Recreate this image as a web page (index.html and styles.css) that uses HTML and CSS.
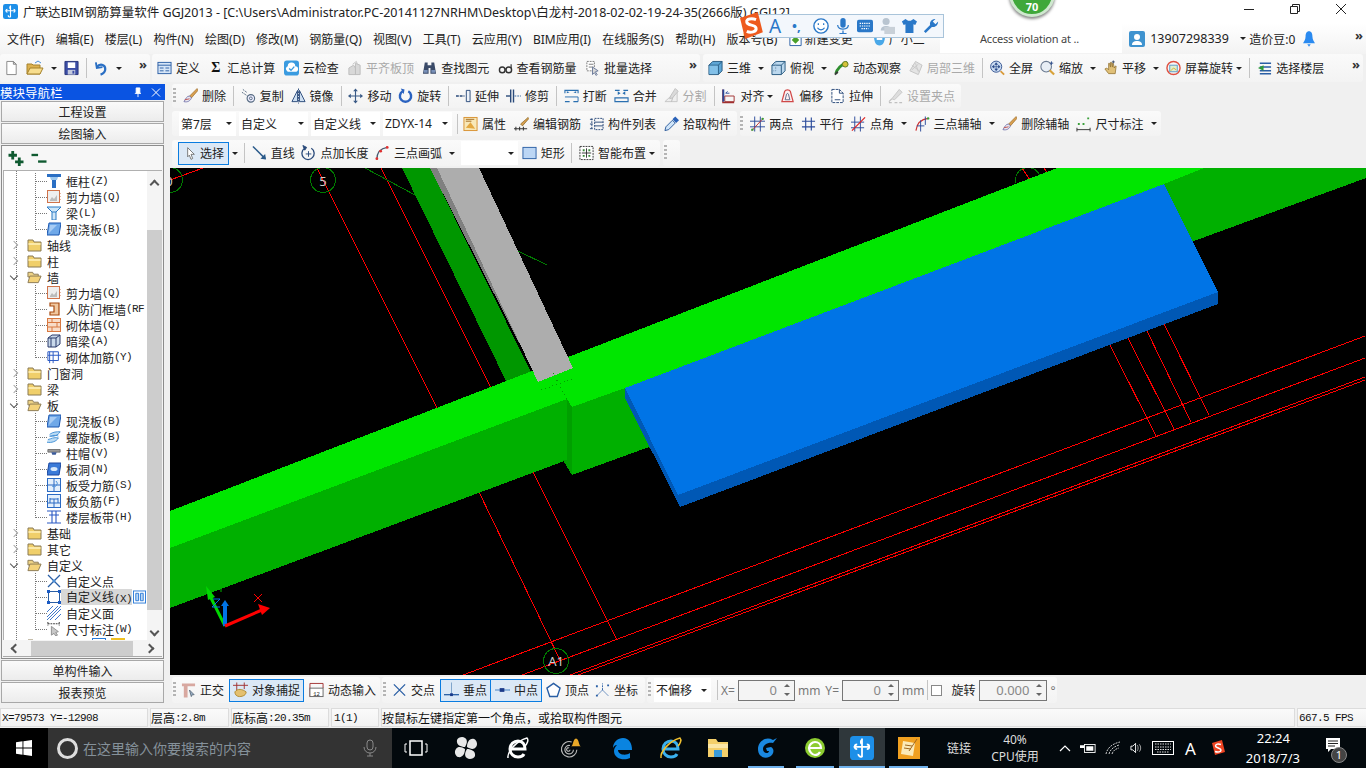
FILE: index.html
```html
<!DOCTYPE html>
<html lang="zh-CN">
<head>
<meta charset="utf-8">
<title>广联达BIM钢筋算量软件 GGJ2013</title>
<link rel="stylesheet" href="styles.css">
</head>
<body>
<svg class="sprite" aria-hidden="true">
<defs>
<symbol id="new" viewBox="0 0 16 16"><path d="M3 1h7l3 3v11H3z" fill="#fff" stroke="#858585"/><path d="M10 1v3h3z" fill="#ddd" stroke="#858585"/></symbol>
<symbol id="open" viewBox="0 0 18 16"><path d="M1 4h5l1 1h7v9H1z" fill="#dcb14f" stroke="#a5822c"/><path d="M4 8h13l-3 6H1z" fill="#f7dd8e" stroke="#a5822c"/><path d="M9 3l3-2 3 2" stroke="#4a8fd8" fill="none"/></symbol>
<symbol id="save" viewBox="0 0 16 16"><path d="M1 1h14v14H1z" fill="#3b4da6" stroke="#27337a"/><path d="M4 2h8v6H4z" fill="#fff"/><path d="M4 10h8v5H4z" fill="#c4cade"/><path d="M9 11h2v3H9z" fill="#3b4da6"/></symbol>
<symbol id="undo" viewBox="0 0 16 16"><path d="M2 2l1 6 6-1" fill="none" stroke="#2a6fc4" stroke-width="2"/><path d="M3 7c3-4 9-3 9 2 0 3-2 5-5 6" fill="none" stroke="#2a6fc4" stroke-width="2.4"/></symbol>
<symbol id="def" viewBox="0 0 16 16"><rect x="1" y="2" width="14" height="12" fill="#d7e6f7" stroke="#2b5fa5"/><path d="M1 5h14M3 8h4M3 11h4M9 8h4M9 11h4" stroke="#2b5fa5"/></symbol>
<symbol id="cloud" viewBox="0 0 16 16"><rect x="0" y="0" width="16" height="16" rx="3" fill="#3a9be0"/><path d="M3 11a3 3 0 0 1 1-5 4 4 0 0 1 8 0 3 3 0 0 1 0 6H4z" fill="#fff"/><path d="M5.500 8.500l2 2 3.500-4" fill="none" stroke="#3a9be0" stroke-width="1.500"/></symbol>
<symbol id="flat" viewBox="0 0 16 16"><path d="M2 15V8l5-3 2 3v7zM9 15V3l5 2v10z" fill="#d8d8d8" stroke="#bcbcbc"/><path d="M6 4l4-3 1 3" stroke="#c4c4c4" fill="none"/></symbol>
<symbol id="binoc" viewBox="0 0 16 16"><path d="M3 2h3v3h4V2h3l2 12H9V8H7v6H1z" fill="#3a4a68"/><path d="M2 10h4v3H2zM10 10h4v3h-4z" fill="#7890b8"/></symbol>
<symbol id="glass" viewBox="0 0 16 16"><circle cx="4.500" cy="10" r="3" fill="none" stroke="#333" stroke-width="1.500"/><circle cx="11.500" cy="10" r="3" fill="none" stroke="#333" stroke-width="1.500"/><path d="M7 9h2M14 8V4" stroke="#333" stroke-width="1.200"/></symbol>
<symbol id="batch" viewBox="0 0 16 16"><path d="M2 1h8v10H2z" fill="#fff" stroke="#7a7a7a" stroke-dasharray="2 1"/><path d="M4 4h5M4 7h5" stroke="#7a7a7a"/><path d="M8 7l6 4-3 1 2 3-1 1-2-3-2 2z" fill="#d8d8d8" stroke="#6a7a9a"/></symbol>
<symbol id="cube" viewBox="0 0 16 16"><path d="M1 5l4-4h10v10l-4 4H1z" fill="#5ea6d6" stroke="#25577e"/><path d="M1 5h10v10M11 5l4-4" fill="none" stroke="#25577e"/><path d="M1.500 5.500h9v9h-9z" fill="#82c0e8"/></symbol>
<symbol id="cubel" viewBox="0 0 16 16"><path d="M1 5l4-4h10v10l-4 4H1z" fill="#bcd8ee" stroke="#25577e"/><path d="M1 5h10v10M11 5l4-4" fill="none" stroke="#25577e"/><path d="M5 1v10H1" fill="none" stroke="#7ea0bc" stroke-dasharray="2 1"/></symbol>
<symbol id="orbit" viewBox="0 0 16 16"><path d="M2 14C3 9 8 4 14 2" fill="none" stroke="#2f8f2f" stroke-width="3"/><circle cx="12" cy="4" r="3" fill="#d6c23a" stroke="#5d7a20"/><path d="M1 15l3-3" stroke="#3a3a3a" stroke-width="2"/></symbol>
<symbol id="local" viewBox="0 0 16 16"><path d="M8 1l7 4-4 10-9-4z" fill="#e4e4e4" stroke="#c2c2c2"/><path d="M4 5l8 6M8 3l3 9M11 4l-7 6" stroke="#c8c8c8"/></symbol>
<symbol id="full" viewBox="0 0 17 17"><circle cx="7" cy="7" r="6.300" fill="#cbdcf2" stroke="#2a4a8a"/><path d="M7 3v8M3 7h8M7 2.500l-1.500 2h3zM7 11.500l-1.500-2h3zM2.500 7l2-1.500v3zM11.500 7l-2-1.500v3z" stroke="#2a4a8a" fill="#2a4a8a" stroke-width=".7"/><path d="M12 12l4 4" stroke="#d89a3a" stroke-width="2"/></symbol>
<symbol id="zoomi" viewBox="0 0 17 17"><circle cx="7" cy="7" r="6" fill="#e8eef5" stroke="#6a7a90" stroke-width="1.200"/><path d="M11 11l5 5" stroke="#d8a23a" stroke-width="2.400"/><path d="M13 1v4M11 3h4" stroke="#2a4a8a"/></symbol>
<symbol id="pan" viewBox="0 0 16 16"><path d="M2 9l2-1 2 2V3l1 0 1 4V2l1 0 1 5V3l1 0 1 5 1-2 1 0-1 8H6z" fill="#e0c078" stroke="#907030" stroke-width=".8"/><path d="M11 0v3M9.500 1.500h3" stroke="#3a4a68"/></symbol>
<symbol id="screen" viewBox="0 0 16 16"><circle cx="8" cy="8" r="7" fill="none" stroke="#e05040" stroke-width="1.500"/><rect x="4" y="5" width="8" height="7" fill="#dff0d0" stroke="#5a9ac8"/><path d="M5 11l3-3 3 2" fill="none" stroke="#d8b030"/></symbol>
<symbol id="floor" viewBox="0 0 16 16"><path d="M3 3h12M3 7h12M3 11h12M3 14h12" stroke="#2a5fa5" stroke-width="1.600"/><path d="M7 5L1 8l6 3z" fill="#2e9a3a"/></symbol>
<symbol id="erase" viewBox="0 0 16 16"><path d="M15 0L7 8l2 2 7-8z" fill="#d8a050" stroke="#906020" stroke-width=".6"/><path d="M7 8c-3 0-4 3-6 6 4 1 7-1 8-4z" fill="#e8e8f0" stroke="#6060a0" stroke-width=".8"/><path d="M2 12l5-1" stroke="#c05050"/></symbol>
<symbol id="copy" viewBox="0 0 16 16"><circle cx="10.500" cy="10.500" r="4" fill="#eef" stroke="#556a80" stroke-width="1.200"/><circle cx="10.500" cy="10.500" r="1.500" fill="none" stroke="#556a80"/><path d="M2 1l4 3M1 4l6 4" stroke="#556a80" stroke-dasharray="2 1"/></symbol>
<symbol id="mirror" viewBox="0 0 16 16"><path d="M7 2v12H1zM9 2v12h6z" fill="#cfe0f2" stroke="#2a4a7a"/><path d="M8 0v16" stroke="#2a4a7a" stroke-dasharray="2 1"/></symbol>
<symbol id="move" viewBox="0 0 16 16"><path d="M8 1v14M1 8h14" stroke="#3a5a86" stroke-width="1.200"/><path d="M8 0L5.500 3h5zM8 16l-2.500-3h5zM0 8l3-2.500v5zM16 8l-3-2.500v5z" fill="#3a5a86"/></symbol>
<symbol id="rot" viewBox="0 0 16 16"><path d="M5 3a6 6 0 1 0 6 0" fill="none" stroke="#2a62c0" stroke-width="2.600"/><path d="M3 0l4 1-1 5z" fill="#2a62c0"/></symbol>
<symbol id="ext" viewBox="0 0 16 16"><path d="M0 8h9" stroke="#2a4a7a" stroke-dasharray="3 1" stroke-width="1.500"/><path d="M11 2h4v12h-4z" fill="#eef3fa" stroke="#2a4a7a"/></symbol>
<symbol id="trim" viewBox="0 0 16 16"><path d="M5 1v14M8 1v14" stroke="#2a4a7a" stroke-width="1.500"/><path d="M0 8h5" stroke="#2a4a7a" stroke-width="1.500"/><path d="M9 8h7" stroke="#7a9ac0" stroke-dasharray="2 1" stroke-width="1.500"/></symbol>
<symbol id="brk" viewBox="0 0 16 16"><path d="M1 5V2h14v3M1 14h5M10 14h5" fill="none" stroke="#2a6fb0" stroke-width="1.200"/><path d="M1 9h14v5" fill="none" stroke="#2a6fb0"/><path d="M6 4L3 3v2zM10 4l3-1v2z" fill="#2a6fb0"/></symbol>
<symbol id="mrg" viewBox="0 0 16 16"><path d="M1 2h5M10 2h5M1 10h14v4H1z" fill="none" stroke="#2a6fb0" stroke-width="1.200"/><path d="M7 5L4 3v4zM9 5l3-2v4z" fill="#2a6fb0"/></symbol>
<symbol id="spl" viewBox="0 0 16 16"><path d="M1 14L14 2v12z" fill="#eee" stroke="#c4c4c4"/><path d="M8 14l2-7" stroke="#bbb"/><path d="M12 0l3 3-6 7-3 1 1-3z" fill="#dadada" stroke="#c0c0c0"/></symbol>
<symbol id="align" viewBox="0 0 16 16"><path d="M2 1v14h12" fill="none" stroke="#a03030" stroke-width="1.400"/><path d="M4 8h10v6H4z" fill="none" stroke="#a03030"/><path d="M2.500 1v13" stroke="#2a4a9a" stroke-width="2"/><path d="M5 5h4M5 5l2-2" stroke="#2a4a9a"/></symbol>
<symbol id="offs" viewBox="0 0 16 16"><path d="M2 14l3-11c1-2 5-2 6 0l3 11z" fill="#fff0f0" stroke="#d04848" stroke-width="1.300"/><path d="M5.500 12L7 6c.5-1 1.500-1 2 0l1.500 6z" fill="none" stroke="#5a6a8a"/></symbol>
<symbol id="strt" viewBox="0 0 16 16"><path d="M2 1h8l4 4v10H2z" fill="#fff" stroke="#2a4a7a" stroke-dasharray="3 1"/><path d="M10 1v4h4M5 12h6" fill="none" stroke="#2a4a7a"/></symbol>
<symbol id="grp" viewBox="0 0 16 16"><path d="M12 1l3 3-8 8-3-1z" fill="#dedede" stroke="#c6c6c6"/><path d="M1 15h3M7 15h3M12 15h3M4 11l-3 3" stroke="#c0c0c0" stroke-width="1.300"/></symbol>
<symbol id="prop" viewBox="0 0 16 16"><rect x="1" y="1" width="14" height="14" fill="#f8e8b8" stroke="#d89030"/><path d="M3 12l5-6 5 7z" fill="#e4a840"/><path d="M3 5h6M3 3h9" stroke="#a06820"/></symbol>
<symbol id="edit" viewBox="0 0 16 16"><path d="M15 1L7 8l2 2 7-8z" fill="#d8a050" stroke="#806020" stroke-width=".7"/><path d="M0 13h14M2 11v4M6 11v4M10 11v4" stroke="#333" stroke-width="1.100"/></symbol>
<symbol id="list" viewBox="0 0 16 16"><path d="M3 2v12M6 2h9v12H6z" fill="none" stroke="#2a4a7a" stroke-dasharray="2 1"/><path d="M6 6h9M6 10h9" stroke="#2a4a7a"/><path d="M1 3h3M1 8h3M1 13h3" stroke="#2a4a7a"/></symbol>
<symbol id="pick" viewBox="0 0 16 16"><path d="M1 15l1-4 7-7 3 3-7 7z" fill="#cfe4f8" stroke="#2a5a9a"/><path d="M9 3l3-3 4 4-3 3z" fill="#2a62b8"/></symbol>
<symbol id="twop" viewBox="0 0 16 16"><path d="M5 0v16M11 0v16M0 5h16M0 11h16" stroke="#2a4a9a"/><path d="M2 15L14 2" stroke="#c03030"/><circle cx="2.500" cy="14" r="1.300" fill="#3a9a3a"/><circle cx="13.500" cy="2.500" r="1.300" fill="#3a9a3a"/></symbol>
<symbol id="para" viewBox="0 0 16 16"><path d="M5 1v14M11 1v14M1 5h14M1 11h14" stroke="#2a4a9a" stroke-width="1.200"/></symbol>
<symbol id="ang" viewBox="0 0 16 16"><path d="M4 0v16M10 0v16M0 6h14M0 12h14" stroke="#2a4a9a"/><path d="M1 15L15 1" stroke="#e02020" stroke-width="1.300"/></symbol>
<symbol id="tri" viewBox="0 0 16 16"><path d="M1 15C2 7 6 3 14 2" fill="none" stroke="#d03030" stroke-width="1.300"/><path d="M6 16V4M10 10H2M11 0v9" stroke="#2a4a9a"/><circle cx="14" cy="2" r="1.300" fill="#3a9a3a"/></symbol>
<symbol id="dim" viewBox="0 0 16 16"><path d="M1 12v4M15 12v4M1 14h14" stroke="#333"/><path d="M2 7h2v2H2zM7 7h2v2H7zM12 1h2v2h-2z" fill="#3aa03a"/></symbol>
<symbol id="curs" viewBox="0 0 12 16"><path d="M2 1l8 8-4 0 2 5-2 1-2-5-2 2z" fill="#fff" stroke="#666"/></symbol>
<symbol id="line" viewBox="0 0 16 16"><path d="M1 1l13 13" stroke="#2a5a8a" stroke-width="1.600"/><path d="M15 15l-6-1 5-5z" fill="#2a5a8a"/></symbol>
<symbol id="plen" viewBox="0 0 16 16"><path d="M4 3a6.500 6.500 0 1 0 7 0" fill="none" stroke="#2a4a7a" stroke-width="1.400"/><path d="M2 0l4 2-2 3zM8 6v6M5 9h6" stroke="#2a4a7a" fill="#2a4a7a"/></symbol>
<symbol id="arc" viewBox="0 0 16 16"><path d="M2 15C2 8 6 3 13 2" fill="none" stroke="#4a5a70" stroke-width="1.400"/><circle cx="2" cy="14" r="1.500" fill="#e03030"/><circle cx="6" cy="6" r="1.500" fill="#e03030"/><circle cx="13" cy="2" r="1.500" fill="#e03030"/></symbol>
<symbol id="rect" viewBox="0 0 16 16"><rect x="1" y="2" width="14" height="12" fill="#bcd6f4" stroke="#2a5fa5"/></symbol>
<symbol id="smart" viewBox="0 0 16 16"><path d="M1 1h14v14H1z" fill="#fff" stroke="#333" stroke-dasharray="2 1"/><path d="M8 3v10M3 8h10" stroke="#333"/><path d="M4 4h2v2H4zM10 4h2v2h-2zM4 10h2v2H4zM10 10h2v2h-2z" fill="#3a8a3a"/></symbol>
<symbol id="orth" viewBox="0 0 16 16"><path d="M1 1h14v3H7v12H3V4H1z" fill="#d8a8a0"/><path d="M9 8l5 5-2 0-1 2z" fill="#9ab0c8" stroke="#607080"/></symbol>
<symbol id="snap" viewBox="0 0 16 16"><path d="M4 0v9M12 0v7M0 3h16" stroke="#a03030"/><path d="M2 10c3-4 8-3 12 0 0 3-3 5-7 5-3 0-5-2-5-5z" fill="#e4c070" stroke="#b08a30"/></symbol>
<symbol id="dyn" viewBox="0 0 16 16"><path d="M1 1h14M1 1v14M15 1v5" stroke="#a03030" fill="none"/><rect x="1" y="6" width="14" height="9" fill="#fff" stroke="#666"/><text x="8" y="14" class="mini" text-anchor="middle">12</text></symbol>
<symbol id="cross" viewBox="0 0 16 16"><path d="M2 2l12 12M14 2L2 14" stroke="#2a5fa5" stroke-width="1.400"/></symbol>
<symbol id="perp" viewBox="0 0 16 16"><path d="M0 13h16" stroke="#2a5fa5" stroke-width="1.400"/><path d="M8 0v13" stroke="#7aa0c8"/><path d="M6.500 11.500h3v3h-3z" fill="#1a3a8a"/></symbol>
<symbol id="mid" viewBox="0 0 16 16"><path d="M0 8h16" stroke="#6a9ad0" stroke-width="1.400"/><path d="M5 6h5v4H5z" fill="#1a3a8a"/></symbol>
<symbol id="vert" viewBox="0 0 16 16"><path d="M8 1l7 5-3 9H4L1 6z" fill="#fff" stroke="#2a5fa5" stroke-width="1.500"/></symbol>
<symbol id="coord" viewBox="0 0 16 16"><path d="M2 14L8 8l6 6M8 8V1" fill="none" stroke="#2a5fa5" stroke-dasharray="2 1"/><path d="M1 3h2v2H1zM13 2h2v2h-2zM1 13h2v2H1z" fill="#2a5fa5"/></symbol>
<symbol id="folder" viewBox="0 0 15 14"><path d="M1 2h5l1 2h7v9H1z" fill="#f0cf6a" stroke="#8a7a55"/><path d="M1.500 5h12v2h-12z" fill="#fbe9a8"/></symbol>
<symbol id="foldo" viewBox="0 0 16 14"><path d="M1 2h5l1 2h5v3H1z" fill="#eed385" stroke="#8a7a55"/><path d="M3 6h12l-3 7H1z" fill="#f3d27a" stroke="#8a7a55"/></symbol>
<symbol id="t-col" viewBox="0 0 14 14"><path d="M0 0h14v3H0z" fill="#2a6fc4"/><path d="M3 3h8l-1 3H4z" fill="#9cc8ee"/><path d="M5 6h4v8H5z" fill="#2a6fc4"/></symbol>
<symbol id="t-wall" viewBox="0 0 14 14"><rect x=".5" y=".5" width="12" height="12" fill="#eee" stroke="#d0734a"/><path d="M3 10l2-3 2 2 3-4v6H3z" fill="#bbb"/><path d="M13 3v1M13 6v1M13 9v1" stroke="#d0734a"/></symbol>
<symbol id="t-beam" viewBox="0 0 14 14"><path d="M0 1h14L9 6v8H5V6z" fill="#cfe6f8" stroke="#2a7ac4"/><path d="M5 6h4" stroke="#2a7ac4"/></symbol>
<symbol id="t-slab" viewBox="0 0 14 14"><path d="M2 1h12l-2 12H0z" fill="#6fa8e8" stroke="#1a56b0"/><path d="M3 3l-1 8 8-8z" fill="#a8ccf4"/></symbol>
<symbol id="t-door" viewBox="0 0 14 14"><path d="M3 1h9v12H3v-3h4V4H3z" fill="#f0c8a0" stroke="#a84a10" stroke-width="1.200"/></symbol>
<symbol id="t-brick" viewBox="0 0 14 14"><rect x=".5" y=".5" width="13" height="13" fill="#f8dcc8" stroke="#d87840"/><path d="M0 4.500h14M0 9h14M5 0v4.500M10 4.500V9M5 9v5" stroke="#d87840"/></symbol>
<symbol id="t-hid" viewBox="0 0 14 14"><path d="M1 4l4-3h8v9l-4 3H1z" fill="#c8d8ea" stroke="#2a3a6a"/><path d="M1 4h8v9M9 4l4-3M4 4v9" fill="none" stroke="#2a3a6a"/></symbol>
<symbol id="t-rein" viewBox="0 0 16 14"><path d="M1 1h12v10H1zM7 1v13M3 1v13M13 5h3M1 5h12" fill="none" stroke="#2a5ac4" stroke-width="1.100"/></symbol>
<symbol id="t-spir" viewBox="0 0 16 14"><path d="M1 10c4-1 6-3 12-2-2 4-8 6-13 5M3 4c4-3 8-3 12-3-2 4-8 6-12 5 0 0 6-2 10 0" fill="#bcdcf4" stroke="#3a8ad4"/></symbol>
<symbol id="t-cap" viewBox="0 0 16 14"><path d="M1 3h14v3H1z" fill="#9a9a9a" stroke="#6a6a6a"/><path d="M5 6h6l-1 3H6z" fill="#3a5a9a"/></symbol>
<symbol id="t-hole" viewBox="0 0 14 14"><path d="M2 1h12l-2 12H0z" fill="#3a7ad8" stroke="#1a46a0"/><ellipse cx="7" cy="7" rx="3.500" ry="2" fill="#d8e8fa"/></symbol>
<symbol id="t-r1" viewBox="0 0 14 14"><rect x=".5" y=".5" width="13" height="13" fill="#e4f0fc" stroke="#2a6ac4"/><path d="M1 7h12M7 1v12" stroke="#2a6ac4"/><path d="M9 3a3 3 0 1 1-4 5" fill="none" stroke="#4a90d8"/></symbol>
<symbol id="t-r2" viewBox="0 0 14 14"><rect x=".5" y=".5" width="13" height="13" fill="#e4f0fc" stroke="#2a6ac4"/><path d="M3 4v5M11 4v5M3 5h8M7 5v8M1 9h12" fill="none" stroke="#2a6ac4"/></symbol>
<symbol id="t-band" viewBox="0 0 14 14"><path d="M0 1h14M0 13h14M2 5h10M5 1v12M9 1v12" stroke="#2a5ac4" stroke-width="1.100"/></symbol>
<symbol id="t-pt" viewBox="0 0 14 14"><path d="M1 1l12 12M13 1L1 13" stroke="#2a5fa5" stroke-width="1.300"/><circle cx="7" cy="7" r="1.500" fill="#4a8fd8"/></symbol>
<symbol id="t-line" viewBox="0 0 14 14"><rect x="1.500" y="1.500" width="11" height="11" fill="none" stroke="#2a5fa5"/><path d="M0 0h3v3H0zM11 0h3v3h-3zM0 11h3v3H0zM11 11h3v3h-3z" fill="#1a5ac4"/></symbol>
<symbol id="t-face" viewBox="0 0 14 14"><path d="M0 6l6-6M0 11L11 0M0 14L14 0M3 14L14 3M8 14l6-6" stroke="#2a6ac4" stroke-width=".9"/></symbol>
<symbol id="t-dim" viewBox="0 0 16 16"><path d="M1 0v4M14 0v4M1 2h13" stroke="#222" stroke-dasharray="2 1"/><path d="M5 5l8 6-3 1 2 3-2 1-2-3-3 2z" fill="#c8c8c8" stroke="#888"/></symbol>
<symbol id="t-mini" viewBox="0 0 14 14"><rect x=".5" y=".5" width="13" height="13" fill="#fff" stroke="#2a7ad8"/><path d="M3 3h3v8H3zM8 3h3v8H8z" fill="#bcd8f4" stroke="#2a7ad8"/></symbol>
<symbol id="t-yel" viewBox="0 0 14 14"><rect x="1" y="1" width="12" height="12" fill="#fff" stroke="#f0c020" stroke-width="2"/></symbol>
<symbol id="logo" viewBox="0 0 20 20"><rect width="20" height="20" rx="3" fill="#1d8fe8"/><path d="M10 2v15a2 2 0 0 1-3-2M3 9h13M14 7a2 2 0 0 1 0 4M6 7a2 2 0 0 0 0 4M10 7a2.500 2.500 0 0 1 0-4" fill="none" stroke="#fff" stroke-width="1.500"/></symbol>
</defs>
</svg>

<div class="app">
  <header class="titlebar">
    <svg class="tlogo"><use href="#logo"/></svg>
    <span class="ttext">广联达BIM钢筋算量软件 GGJ2013 - [C:\Users\Administrator.PC-20141127NRHM\Desktop\白龙村-2018-02-02-19-24-35(2666版) GGJ12]</span>
    <div class="winbtns">
      <svg class="wb" viewBox="0 0 12 12"><path d="M1 6.500h10" stroke="#222"/></svg>
      <svg class="wb" viewBox="0 0 12 12"><path d="M1.500 3.500h7v7h-7zM3.500 3.500v-2h7v7h-2" fill="none" stroke="#222"/></svg>
      <svg class="wb" viewBox="0 0 12 12"><path d="M1 1l10 10M11 1L1 11" stroke="#222"/></svg>
    </div>
  </header>

  <nav class="menubar">
    <span>文件(F)</span><span>编辑(E)</span><span>楼层(L)</span><span>构件(N)</span><span>绘图(D)</span><span>修改(M)</span><span>钢筋量(Q)</span><span>视图(V)</span><span>工具(T)</span><span>云应用(Y)</span><span>BIM应用(I)</span><span>在线服务(S)</span><span>帮助(H)</span><span>版本号(B)</span>
    <span class="mi nb"><svg class="ic" viewBox="0 0 16 16"><path d="M2 3h12v12H2z" fill="#fff" stroke="#2a5fa5"/><path d="M8 5l4 4-4 4-4-4z" fill="#4aa02a"/></svg>新建变更</span>
    <span class="mi gx"><svg class="ic" viewBox="0 0 16 16"><path d="M2 3c0 8 2 12 6 12s6-4 6-12c-4 2-8 2-12 0z" fill="#4aa8e8"/><path d="M5 6h6v3H5z" fill="#fff"/></svg>广小二</span>
    <span class="access">Access violation at ..</span>
    <span class="mi us"><svg class="uicon" viewBox="0 0 16 16"><rect width="16" height="16" rx="2" fill="#3f93cf"/><circle cx="8" cy="6" r="3" fill="#fff"/><path d="M3 14c0-3 2-4 5-4s5 1 5 4z" fill="#fff"/></svg><span class="phone">13907298339</span></span>
    <i class="caret cu"></i>
    <span>造价豆:0</span>
    <svg class="bell" viewBox="0 0 14 20"><path d="M7 1c3 0 4 3 4 6 0 4 2 6 3 8H0c1-2 3-4 3-8 0-3 1-6 4-6z" fill="#2a8af0"/><path d="M5 16h4l-2 3z" fill="#2a8af0"/></svg>
    <span class="more mm">»</span>
  </nav>

  <div class="row1">
    <div class="band b1">
      <svg class="ic"><use href="#new"/></svg>
      <svg class="ic wide"><use href="#open"/></svg><i class="caret"></i>
      <svg class="ic"><use href="#save"/></svg>
      <i class="sep"></i>
      <svg class="ic"><use href="#undo"/></svg><i class="caret"></i>
      <span class="more push">»</span>
    </div>
    <div class="band b2">
      <span class="ti"><svg class="ic"><use href="#def"/></svg>定义</span>
      <span class="ti"><b class="sig">Σ</b>汇总计算</span>
      <span class="ti"><svg class="ic"><use href="#cloud"/></svg>云检查</span>
      <span class="ti off"><svg class="ic"><use href="#flat"/></svg>平齐板顶</span>
      <span class="ti"><svg class="ic"><use href="#binoc"/></svg>查找图元</span>
      <span class="ti"><svg class="ic"><use href="#glass"/></svg>查看钢筋量</span>
      <span class="ti"><svg class="ic"><use href="#batch"/></svg>批量选择</span>
      <span class="more push">»</span>
    </div>
    <div class="band b3">
      <span class="ti"><svg class="ic"><use href="#cube"/></svg>三维</span><i class="caret"></i>
      <span class="ti"><svg class="ic"><use href="#cubel"/></svg>俯视</span><i class="caret"></i>
      <span class="ti"><svg class="ic"><use href="#orbit"/></svg>动态观察</span>
      <span class="ti off"><svg class="ic"><use href="#local"/></svg>局部三维</span>
      <i class="sep"></i>
      <span class="ti"><svg class="ic"><use href="#full"/></svg>全屏</span>
      <span class="ti"><svg class="ic"><use href="#zoomi"/></svg>缩放</span><i class="caret"></i>
      <span class="ti"><svg class="ic"><use href="#pan"/></svg>平移</span><i class="caret"></i>
      <span class="ti"><svg class="ic"><use href="#screen"/></svg>屏幕旋转</span><i class="caret tight"></i>
      <i class="sep"></i>
      <span class="ti"><svg class="ic"><use href="#floor"/></svg>选择楼层</span>
      <span class="more push">»</span>
    </div>
  </div>

  <div class="main">
    <aside class="nav">
      <div class="navhead"><span>模块导航栏</span>
        <svg class="pin" viewBox="0 0 10 12"><path d="M3 1h4v5l1 1H2l1-1zM5 7v4" fill="#fff" stroke="#fff"/></svg>
        <svg class="pin x" viewBox="0 0 10 10"><path d="M1 1l8 8M9 1L1 9" stroke="#fff"/></svg>
      </div>
      <div class="tab">工程设置</div>
      <div class="tab">绘图输入</div>
      <div class="panel">
        <div class="expand">
          <svg class="exp" viewBox="0 0 18 16"><path d="M4 0h3v3h3v3H7v3H4V6H1V3h3zM11 7h3v3h3v3h-3v3h-3v-3H8v-3h3z" fill="#0f5a30"/></svg>
          <svg class="exp" viewBox="0 0 18 16"><path d="M1 3h7v2.500H1z" fill="#0f5a30"/><path d="M8 10h9v2.500H8z" fill="#0f5a30"/></svg>
        </div>
        <div class="treewrap">
          <div class="tree">
            <div class="tr l2"><svg class="tic"><use href="#t-col"/></svg>框柱<b>(Z)</b></div>
            <div class="tr l2"><svg class="tic"><use href="#t-wall"/></svg>剪力墙<b>(Q)</b></div>
            <div class="tr l2"><svg class="tic"><use href="#t-beam"/></svg>梁<b>(L)</b></div>
            <div class="tr l2 end"><svg class="tic"><use href="#t-slab"/></svg>现浇板<b>(B)</b></div>
            <div class="tr l1"><i class="chev"></i><svg class="fic"><use href="#folder"/></svg>轴线</div>
            <div class="tr l1"><i class="chev"></i><svg class="fic"><use href="#folder"/></svg>柱</div>
            <div class="tr l1"><i class="chev down"></i><svg class="fic"><use href="#foldo"/></svg>墙</div>
            <div class="tr l2"><svg class="tic"><use href="#t-wall"/></svg>剪力墙<b>(Q)</b></div>
            <div class="tr l2"><svg class="tic"><use href="#t-door"/></svg>人防门框墙<b>(RF</b></div>
            <div class="tr l2"><svg class="tic"><use href="#t-brick"/></svg>砌体墙<b>(Q)</b></div>
            <div class="tr l2"><svg class="tic"><use href="#t-hid"/></svg>暗梁<b>(A)</b></div>
            <div class="tr l2 end"><svg class="tic"><use href="#t-rein"/></svg>砌体加筋<b>(Y)</b></div>
            <div class="tr l1"><i class="chev"></i><svg class="fic"><use href="#folder"/></svg>门窗洞</div>
            <div class="tr l1"><i class="chev"></i><svg class="fic"><use href="#folder"/></svg>梁</div>
            <div class="tr l1"><i class="chev down"></i><svg class="fic"><use href="#foldo"/></svg>板</div>
            <div class="tr l2"><svg class="tic"><use href="#t-slab"/></svg>现浇板<b>(B)</b></div>
            <div class="tr l2"><svg class="tic"><use href="#t-spir"/></svg>螺旋板<b>(B)</b></div>
            <div class="tr l2"><svg class="tic"><use href="#t-cap"/></svg>柱帽<b>(V)</b></div>
            <div class="tr l2"><svg class="tic"><use href="#t-hole"/></svg>板洞<b>(N)</b></div>
            <div class="tr l2"><svg class="tic"><use href="#t-r1"/></svg>板受力筋<b>(S)</b></div>
            <div class="tr l2"><svg class="tic"><use href="#t-r2"/></svg>板负筋<b>(F)</b></div>
            <div class="tr l2 end"><svg class="tic"><use href="#t-band"/></svg>楼层板带<b>(H)</b></div>
            <div class="tr l1"><i class="chev"></i><svg class="fic"><use href="#folder"/></svg>基础</div>
            <div class="tr l1"><i class="chev"></i><svg class="fic"><use href="#folder"/></svg>其它</div>
            <div class="tr l1"><i class="chev down"></i><svg class="fic"><use href="#foldo"/></svg>自定义</div>
            <div class="tr l2"><svg class="tic"><use href="#t-pt"/></svg>自定义点</div>
            <div class="tr l2"><svg class="tic"><use href="#t-line"/></svg><span class="selrow">自定义线<b>(X)</b></span><svg class="tic mini"><use href="#t-mini"/></svg></div>
            <div class="tr l2"><svg class="tic"><use href="#t-face"/></svg>自定义面</div>
            <div class="tr l2 end"><svg class="tic"><use href="#t-dim"/></svg>尺寸标注<b>(W)</b></div>
            <div class="tr frag"><svg class="fic"><use href="#folder"/></svg><svg class="tic f1"><use href="#t-mini"/></svg><svg class="tic"><use href="#t-yel"/></svg></div>
          </div>
          <div class="vscroll"><i class="ar up"></i><i class="thumbv"></i><i class="ar dn"></i></div>
        </div>
        <div class="hscroll"><i class="ar lf"></i><i class="thumbh"></i><i class="ar rt"></i></div>
      </div>
      <div class="tab">单构件输入</div>
      <div class="tab">报表预览</div>
    </aside>

    <section class="work">
      <div class="wrow r2">
        <div class="band bd2">
          <i class="grip"></i>
          <span class="ti"><svg class="ic"><use href="#erase"/></svg>删除</span><i class="sep"></i>
          <span class="ti"><svg class="ic"><use href="#copy"/></svg>复制</span>
          <span class="ti"><svg class="ic"><use href="#mirror"/></svg>镜像</span><i class="sep"></i>
          <span class="ti"><svg class="ic"><use href="#move"/></svg>移动</span>
          <span class="ti"><svg class="ic"><use href="#rot"/></svg>旋转</span><i class="sep"></i>
          <span class="ti"><svg class="ic"><use href="#ext"/></svg>延伸</span>
          <span class="ti"><svg class="ic"><use href="#trim"/></svg>修剪</span><i class="sep"></i>
          <span class="ti"><svg class="ic"><use href="#brk"/></svg>打断</span>
          <span class="ti"><svg class="ic"><use href="#mrg"/></svg>合并</span>
          <span class="ti off"><svg class="ic"><use href="#spl"/></svg>分割</span><i class="sep"></i>
          <span class="ti"><svg class="ic"><use href="#align"/></svg>对齐</span><i class="caret tight"></i>
          <span class="ti"><svg class="ic"><use href="#offs"/></svg>偏移</span>
          <span class="ti"><svg class="ic"><use href="#strt"/></svg>拉伸</span><i class="sep"></i>
          <span class="ti off"><svg class="ic"><use href="#grp"/></svg>设置夹点</span>
        </div>
      </div>
      <div class="wrow r3">
        <div class="band bd3a">
          <span class="sel s57">第7层<i class="caret"></i></span>
          <span class="sel s69">自定义<i class="caret"></i></span>
          <span class="sel s69">自定义线<i class="caret"></i></span>
          <span class="sel s69">ZDYX-14<i class="caret"></i></span>
          <i class="sep"></i>
          <span class="ti"><svg class="ic"><use href="#prop"/></svg>属性</span>
          <span class="ti"><svg class="ic"><use href="#edit"/></svg>编辑钢筋</span>
          <span class="ti"><svg class="ic"><use href="#list"/></svg>构件列表</span>
          <span class="ti"><svg class="ic"><use href="#pick"/></svg>拾取构件</span>
        </div>
        <div class="band bd3b">
          <i class="grip"></i>
          <span class="ti"><svg class="ic"><use href="#twop"/></svg>两点</span>
          <span class="ti"><svg class="ic"><use href="#para"/></svg>平行</span>
          <span class="ti"><svg class="ic"><use href="#ang"/></svg>点角</span><i class="caret"></i>
          <span class="ti"><svg class="ic"><use href="#tri"/></svg>三点辅轴</span><i class="caret"></i>
          <span class="ti"><svg class="ic"><use href="#erase"/></svg>删除辅轴</span>
          <span class="ti"><svg class="ic"><use href="#dim"/></svg>尺寸标注</span><i class="caret"></i>
        </div>
      </div>
      <div class="wrow r4">
        <div class="band bd4a">
          <span class="ti on sel-tool"><svg class="ic sm"><use href="#curs"/></svg>选择</span><i class="caret tight"></i>
          <i class="sep"></i>
          <span class="ti"><svg class="ic"><use href="#line"/></svg>直线</span>
          <span class="ti"><svg class="ic"><use href="#plen"/></svg>点加长度</span>
          <span class="ti"><svg class="ic"><use href="#arc"/></svg>三点画弧</span><i class="caret"></i>
          <span class="sel s57 blank"><i class="caret"></i></span>
          <span class="ti"><svg class="ic"><use href="#rect"/></svg>矩形</span><i class="sep"></i>
          <span class="ti"><svg class="ic"><use href="#smart"/></svg>智能布置</span><i class="caret tight"></i>
        </div>
        <div class="band bd4b"><i class="grip"></i></div>
      </div>

      <svg class="canvas" viewBox="170 168 1196 507" shape-rendering="crispEdges">
        <rect x="170" y="168" width="1196" height="507" fill="#000"/>
        <g stroke="#f00" fill="none" stroke-width="1">
          <path d="M170 180L203 168M317 168L438 410M381 168L492 390M479 492L560 660M533 472L617 640"/>
          <path d="M463 675L1365 336M522 675L1365 358M570 675L1365 377M578 675L1365 380"/>
          <path d="M1110 345L1156 436M1128 338L1174 429M1147 331L1191 422M1164 324L1209 415M1022 168L1030 180M1044 168L1049 176"/>
        </g>
        <g stroke="#007a00" fill="none">
          <path d="M365 168L415 195M518 251L547 265"/>
          <circle cx="323" cy="180" r="12.500"/><circle cx="170" cy="180" r="12.500"/><circle cx="1028" cy="180" r="12.500"/><circle cx="556" cy="661" r="12.500"/>
        </g>
        <g class="axis">
          <text x="323" y="186" text-anchor="middle">5</text>
          <text x="169" y="186" text-anchor="middle">0</text>
          <text x="556" y="666" text-anchor="middle">A1</text>
        </g>
        <polygon points="402,168 430,168 533,376 508,385" fill="#009700"/>
        <polygon points="1150,168 1366,168 1366,178 1194,241 1170,250 1150,190" fill="#00b000"/>
        <polygon points="170,511 1057,168 1204,168 1164,184 625,388 572,407 567,399 170,548" fill="#00e600"/>
        <polygon points="170,548 567,399 567,460 170,608" fill="#00b000"/>
        <polygon points="567,399 572,407 572,475 563,460 567,460" fill="#009f00"/>
        <polygon points="572,407 625,388 680,497 649,447 572,475" fill="#00b000"/>
        <polygon points="430,168 437,168 538,382 532,368" fill="#808080"/>
        <polygon points="437,168 479,168 573,368 538,382" fill="#adadad"/>
        <path d="M553 373L571 407M541 390L575 378" stroke="#00a000" stroke-dasharray="1 3" fill="none"/>
        <polygon points="625,388 625,398 680,507 678,495" fill="#0058b5"/>
        <polygon points="678,495 1218,292 1218,304 680,507" fill="#0058b5"/>
        <polygon points="625,388 1164,184 1218,292 678,495" fill="#0074e6"/>
        <g class="triad" shape-rendering="auto">
          <path d="M210 596L225 626" stroke="#00d800" stroke-width="3"/>
          <path d="M206 586L215 597L208 600Z" fill="#00d800"/>
          <path d="M225 626V605" stroke="#0074e6" stroke-width="4"/>
          <path d="M225 600l-4 6h8z" fill="#0074e6"/>
          <path d="M225 626L262 610" stroke="#f00" stroke-width="3"/>
          <path d="M270 608L258 604L262 615Z" fill="#f00"/>
          <path d="M254 594L262 602M262 594L254 602" stroke="#f00"/>
          <path d="M217 584L221 588L225 584M221 588V592" stroke="#00b000" fill="none"/>
          <path d="M213 599H220L212 607H220" stroke="#0074e6" fill="none"/>
        </g>
      </svg>

      <div class="wrow rb">
        <div class="band bb1">
          <i class="grip"></i>
          <span class="ti"><svg class="ic"><use href="#orth"/></svg>正交</span>
          <span class="ti on snapbox"><svg class="ic"><use href="#snap"/></svg>对象捕捉</span>
          <span class="ti"><svg class="ic"><use href="#dyn"/></svg>动态输入</span>
        </div>
        <div class="band bb2">
          <i class="grip"></i>
          <span class="ti"><svg class="ic"><use href="#cross"/></svg>交点</span>
          <span class="pair">
            <span class="ti on"><svg class="ic"><use href="#perp"/></svg>垂点</span><span class="ti on"><svg class="ic"><use href="#mid"/></svg>中点</span>
          </span>
          <span class="ti"><svg class="ic"><use href="#vert"/></svg>顶点</span>
          <span class="ti"><svg class="ic"><use href="#coord"/></svg>坐标</span>
        </div>
        <div class="band bb3">
          <i class="grip"></i>
          <span class="sel s57 nob">不偏移<i class="caret"></i></span>
          <i class="sep sx"></i>
          <span class="lab">X=</span><span class="spin s57b">0<i class="sp"></i></span><span class="lab">mm</span>
          <span class="lab y">Y=</span><span class="spin s57b">0<i class="sp"></i></span><span class="lab">mm</span>
          <i class="sep"></i>
          <i class="chk"></i>
          <span class="rotl">旋转</span>
          <span class="spin s68">0.000<i class="sp"></i></span><span class="lab deg">°</span>
        </div>
      </div>
    </section>
  </div>

  <footer class="status">
    <span class="cell c147">X=79573 Y=-12908</span>
    <span class="cell c77 big">层高<b>:2.8m</b></span>
    <span class="cell c97 big">底标高<b>:20.35m</b></span>
    <span class="cell c47"><b>1(1)</b></span>
    <span class="cell cprompt big">按鼠标左键指定第一个角点，或拾取构件图元</span>
    <span class="cell cfps">667.5 FPS</span>
  </footer>

  <div class="taskbar">
    <div class="start"><svg class="win" viewBox="0 0 16 16"><path d="M0 2.200l6.500-.9v6.200H0zM7.400 1.200L16 0v7.500H7.400zM0 8.400h6.500v6.300L0 13.800zM7.400 8.400H16V16l-8.600-1.200z" fill="#fff"/></svg></div>
    <div class="search">
      <i class="cortana"></i><span>在这里输入你要搜索的内容</span>
      <svg class="micsv" viewBox="0 0 14 18"><rect x="4" y="1" width="6" height="10" rx="3" fill="none" stroke="#8a8a8a"/><path d="M1 8c0 8 12 8 12 0M7 14v3M4 17h6" fill="none" stroke="#8a8a8a"/></svg>
    </div>
    <div class="tk w48"><svg class="tki" viewBox="0 0 24 16"><path d="M6 1h12v14H6z" fill="none" stroke="#fff" stroke-width="1.500"/><path d="M3 4H1v8h2M21 4h2v8h-2" fill="none" stroke="#fff"/></svg></div>
    <div class="tk w52"><svg class="tki" viewBox="0 0 24 24"><path d="M11 11C7 11 2 9 3 4c1-3 6-4 8-2 3 2 2 6 0 9zM13 11c0-4 2-9 7-8 3 1 4 6 2 8-2 3-6 2-9 0zM13 13c4 0 9 2 8 7-1 3-6 4-8 2-3-2-2-6 0-9zM11 13c0 4-2 9-7 8-3-1-4-6-2-8 2-3 6-2 9 0z" fill="#e8e8e8"/></svg></div>
    <div class="tk w52"><svg class="tki" viewBox="0 0 24 24"><path d="M5 13h14c0-5-3-8-7-8s-8 3-8 8 4 8 8 8c3 0 5-1 6-3" fill="none" stroke="#fff" stroke-width="3"/><path d="M2 22C1 16 10 5 21 2c2 2 0 6-2 8" fill="none" stroke="#fff" stroke-width="1.500"/></svg></div>
    <div class="tk w52"><svg class="tki" viewBox="0 0 28 28"><path d="M22 16a9 9 0 1 1-6-9M18 16a5 5 0 1 1-4-5M14 16a2 2 0 1 1-1-2" fill="none" stroke="#bbb" stroke-width="1.300"/><path d="M15 12c3 0 2-8 6-9 4 1 3 9 6 9z" fill="#e8a828"/></svg></div>
    <div class="tk w52"><svg class="tki" viewBox="0 0 24 24"><path d="M3 12C3 6 8 2 13 2c6 0 9 5 9 12H8c0 5 8 6 12 3v5c-6 3-16 1-16-7 0-2 1-4 3-6-2 0-3 1-4 3z" fill="#0a84e0"/></svg></div>
    <div class="tk w46"><svg class="tki" viewBox="0 0 24 24"><path d="M5 13h14c0-5-3-8-7-8s-8 3-8 8 4 8 8 8c3 0 5-1 6-3" fill="none" stroke="#3ab0ee" stroke-width="3"/><path d="M2 22C1 16 10 5 21 2c2 2 0 6-2 8" fill="none" stroke="#f0c030" stroke-width="1.500"/></svg></div>
    <div class="tk w48"><svg class="tki" viewBox="0 0 24 24"><path d="M2 3h8l2 3h10v15H2z" fill="#f4cf6a"/><path d="M2 8h20v4H2z" fill="#fbe6a6"/><path d="M8 14h8v7H8z" fill="#3a9ad8"/></svg></div>
    <div class="tk w48 run r36"><svg class="tki" viewBox="0 0 24 24"><path d="M19 4C12 0 4 5 4 13s7 10 11 8c5-2 6-8 2-10l-5 1 1 3h2c0 3-6 3-6-2 0-4 5-7 10-6l4-5z" fill="#1a88e0"/></svg></div>
    <div class="tk w49 run r38"><svg class="tki" viewBox="0 0 24 24"><circle cx="12" cy="12" r="10" fill="#8ccc30"/><path d="M6 12h12c0-4-3-6-6-6s-6 3-6 6 3 7 6 7c2 0 4-1 5-3" fill="none" stroke="#fff" stroke-width="2.200"/></svg></div>
    <div class="tk w46 run act"><svg class="tki" viewBox="0 0 20 20"><use href="#logo"/></svg></div>
    <div class="tk w47 run r39"><svg class="tki" viewBox="0 0 24 24"><rect x="1" y="1" width="22" height="22" fill="#f0a020"/><path d="M6 5l12 2-2 13-12-2z" fill="#fbeab8"/><path d="M8 9l7 1M7 12l7 1M20 3l-8 12" stroke="#a06820"/></svg></div>
    <div class="tk w50 tktext">链接</div>
    <div class="tk w54 cpu"><span>40%</span><span>CPU使用</span></div>
    <div class="tray">
      <svg class="tr1" viewBox="0 0 12 8"><path d="M1 7l5-5 5 5" fill="none" stroke="#fff" stroke-width="1.200"/></svg>
      <svg class="tr2" viewBox="0 0 18 14"><rect x="5" y="3" width="12" height="9" fill="none" stroke="#fff"/><path d="M7 5h8v5H7zM1 0v4M4 0v4M0 4h5v3H0z" fill="#fff"/></svg>
      <svg class="tr2" viewBox="0 0 16 14"><path d="M1 13C2 8 6 3 15 1M4 13C5 9 8 6 14 4M7 13c1-3 3-5 7-6" fill="none" stroke="#ccc" stroke-dasharray="2 1"/></svg>
      <svg class="tr3" viewBox="0 0 14 14"><path d="M1 5h2l3-3v10L3 9H1z" fill="none" stroke="#fff"/><path d="M8 4c1 2 1 4 0 6M10 3c2 2 2 6 0 8" fill="none" stroke="#aaa"/></svg>
      <svg class="tr4" viewBox="0 0 22 14"><rect x=".5" y=".5" width="21" height="13" fill="none" stroke="#fff"/><path d="M3 3h16M3 6h16M3 8.500h16M5 11h12" stroke="#ddd" stroke-dasharray="1.500 1"/></svg>
      <span class="tra">A</span>
      <svg class="tr5" viewBox="0 0 14 16"><path d="M1 3l10-3 3 12-10 3z" fill="#ee4422"/><path d="M10 4.500C7 3.500 4.500 4 4.500 6S10 8 10 10 7 12.500 4 11.500" fill="none" stroke="#fff" stroke-width="1.500"/></svg>
    </div>
    <div class="clock"><span>22:24</span><span>2018/7/3</span></div>
    <div class="notif">
      <svg class="ncsv" viewBox="0 0 16 16"><path d="M1 1h14v11H6l-3 3v-3H1z" fill="#fff"/><path d="M3 4h10M3 6.500h10M3 9h7" stroke="#222"/></svg>
      <span class="nbadge">1</span>
    </div>
  </div>

  <div class="gauge"><span>70</span></div>
  <div class="sogou">
    <svg class="sg-s" viewBox="0 0 28 32"><path d="M1 7L22 0l6 24-21 8z" fill="#ee5a1e"/><path d="M20 9C15 7 8 8 9 12 10 17 19 14 20 19 21 24 13 25 9 23" fill="none" stroke="#fff" stroke-width="3.500"/></svg>
    <span class="sg-a">A</span>
    <span class="sg-c">•,</span>
    <svg class="sgi" viewBox="0 0 18 18"><circle cx="9" cy="9" r="8" fill="#fff" stroke="#2a78c8" stroke-width="1.600"/><path d="M6 6v2M12 6v2M5 11c2 3 6 3 8 0" fill="none" stroke="#2a78c8" stroke-width="1.400"/></svg>
    <svg class="sgi" viewBox="0 0 18 18"><rect x="6" y="0" width="6" height="11" rx="3" fill="#2a78c8"/><path d="M3 8c0 6 12 6 12 0M9 14v3M5 17.500h8" fill="none" stroke="#2a78c8" stroke-width="1.400"/></svg>
    <svg class="sgi" viewBox="0 0 18 18"><rect x="0" y="2" width="18" height="14" rx="2" fill="#2a78c8"/><path d="M3 6h12M3 9h12M5 12h8" stroke="#fff" stroke-dasharray="1.500 1" stroke-width="1.300"/></svg>
    <svg class="sgi" viewBox="0 0 18 18"><circle cx="8" cy="4" r="4" fill="#b8c4d0"/><path d="M2 14c0-4 3-5 6-5s6 1 6 5z" fill="#b8c4d0"/><rect x="6" y="10" width="12" height="8" fill="#c8d0d8"/></svg>
    <svg class="sgi" viewBox="0 0 18 18"><path d="M5 1L1 4l2 4 2-1v10h9V7l2 1 2-4-4-3-3 2H8z" fill="#2a78c8"/></svg>
    <svg class="sgi" viewBox="0 0 18 18"><path d="M1 15l7-7c-1-4 2-7 6-7l-3 3 3 3 3-3c0 4-3 7-7 6l-7 7z" fill="#2a78c8"/></svg>
  </div>
</div>
</body>
</html>
```
FILE: styles.css
```css
* { box-sizing: border-box; }
html, body { margin: 0; padding: 0; }
body { width: 1366px; height: 768px; overflow: hidden; background: #f0f0f0; font-family: "Noto Sans", "Noto Sans CJK SC", sans-serif; font-size: 12px; color: #222; }
.sprite { width: 0; height: 0; display: block; }
.mini { font: 6px "Liberation Mono", monospace; fill: #222; }
.app { position: relative; width: 1366px; height: 768px; display: flex; flex-direction: column; overflow: hidden; }

/* title */
.titlebar { height: 23px; flex: none; background: #fff; display: flex; align-items: center; padding-left: 3px; }
.tlogo { width: 15px; height: 15px; margin-right: 5px; }
.ttext { font-size: 12.500px; white-space: nowrap; flex: 1; overflow: hidden; }
.winbtns { display: flex; width: 140px; flex: none; margin-top: -6px; }
.wb { width: 12px; height: 12px; margin: 0 17px; }

/* menu */
.menubar { height: 31px; flex: none; display: flex; align-items: center; padding-left: 7px; gap: 11.200px; background: linear-gradient(#ffffff, #f3f3f3); white-space: nowrap; }
.mi { display: flex; align-items: center; gap: 2px; }
.nb { margin-left: -1px; }
.gx { margin-left: 8px; }
.access { width: 182px; height: 29px; margin-left: 4px; padding-left: 40px; background: #fff; line-height: 29px; color: #444; font-size: 11px; letter-spacing: -.2px; flex: none; }
.us { margin-left: -4px; }
.uicon { width: 16px; height: 18px; margin-right: 3px; }
.phone { font-size: 12.500px; }
.bell { width: 12px; height: 18px; margin-left: -4px; }
.cu { margin-left: -2px; margin-right: -8px; }
.mm { margin-left: auto; margin-right: 3px; }
.more { font-size: 13px; font-weight: 700; line-height: 10px; margin-top: -8px; color: #333; }

/* top row */
.row1 { height: 30px; flex: none; display: flex; align-items: flex-start; }
.row1 .band { height: 28px; }
.band { display: flex; align-items: center; height: 100%; background: linear-gradient(#fafafa, #f3f3f3); border-radius: 3px; gap: 8px; white-space: nowrap; }
.b1 { width: 150px; padding-left: 4px; gap: 7px; }
.b2 { width: 548px; margin-left: 2px; padding-left: 5px; gap: 8.300px; }
.b3 { width: 660px; margin-left: 3px; padding-left: 5px; gap: 7px; }
.push { margin-left: auto; margin-right: 3px; }
.ti { display: inline-flex; align-items: center; gap: 4px; flex: none; height: 100%; }
.off { color: #a9a9a9; }
.ic { width: 15px; height: 16px; flex: none; }
.ic.wide { width: 18px; }
.ic.sm { width: 10px; height: 15px; }
.sig { width: 15px; text-align: center; font: 700 14px "Liberation Serif", serif; color: #111; }
.caret { width: 0; height: 0; flex: none; border: 3px solid transparent; border-top: 3px solid #222; border-bottom: 0; margin-left: 0; }
.caret.tight { margin-left: -4px; }
.sep { width: 1px; height: 20px; flex: none; background: #c4c4c4; }
.grip { width: 3px; height: 16px; flex: none; margin-left: 1px; background: repeating-linear-gradient(#b4b4b4 0 2px, transparent 2px 4px); }

/* main */
.main { height: 621px; flex: none; display: flex; }
.nav { width: 165px; flex: none; display: flex; flex-direction: column; gap: 1px; }
.navhead { height: 16px; flex: none; background: #0a54e2; color: #fff; display: flex; align-items: center; font-size: 12.500px; }
.navhead span { flex: 1; }
.pin { width: 10px; height: 11px; margin-right: 8px; }
.pin.x { margin-right: 4px; }
.tab { height: 21px; flex: none; margin: 0 1px; border: 1px solid #a8a8a8; background: linear-gradient(#fafafa, #ececec); display: flex; align-items: center; justify-content: center; font-size: 12px; }
.panel { height: 514px; flex: none; margin: 0 1px; border: 1px solid #8c8c8c; background: #f4f4f4; display: flex; flex-direction: column; padding: 0 1px; }
.expand { height: 24px; flex: none; background: #f7f7f7; display: flex; align-items: center; gap: 5px; padding-left: 4px; }
.exp { width: 18px; height: 15px; }
.treewrap { height: 470px; flex: none; display: flex; border: 1px solid #b0b0b0; border-bottom: 0; border-right: 0; background: #fff; overflow: hidden; }
.tree { flex: none; width: 143px; padding-top: 2px; overflow: hidden; background-image: repeating-linear-gradient(#777 0 1px, transparent 1px 2px); background-size: 1px 100%; background-repeat: no-repeat; background-position: 12px 0; }
.tr { height: 16px; display: flex; align-items: center; white-space: nowrap; font-family: "Noto Sans CJK SC", sans-serif; font-size: 12px; background-repeat: no-repeat; color: #222; }
.tr b { font: 400 11px "Liberation Mono", monospace; letter-spacing: -.6px; }
.l1 { padding-left: 5px; }
.l2 { padding-left: 43px; background-image: repeating-linear-gradient(#777 0 1px, transparent 1px 2px), repeating-linear-gradient(90deg, #777 0 1px, transparent 1px 2px); background-size: 1px 100%, 12px 1px; background-position: 31px 0, 32px 8px; }
.l2.end { background-size: 1px 9px, 12px 1px; }
.frag { padding-left: 14px; }
.f1 { margin-left: 45px; margin-right: 7px; }
.tic { width: 14px; height: 14px; flex: none; margin-right: 5px; }
.tic.mini { margin: 0 0 0 1px; width: 13px; }
.fic { width: 15px; height: 14px; flex: none; margin: 0 5px 0 9px; }
.chev { width: 6px; height: 6px; flex: none; border-right: 1.500px solid #aaa; border-top: 1.500px solid #aaa; transform: rotate(45deg); margin-left: 2px; margin-right: 1px; }
.chev.down { border-color: #555; transform: rotate(135deg); margin-top: -3px; }
.selrow { background: #d8d8d8; margin-left: -5px; padding-left: 5px; height: 16px; line-height: 16px; width: 71px; }
.vscroll { width: 15px; flex: none; background: #f4f4f4; display: flex; flex-direction: column; align-items: center; }
.thumbv { width: 15px; height: 380px; flex: none; background: #cdcdcd; margin: 42px 0 18px; }
.hscroll { height: 17px; flex: none; background: #f4f4f4; display: flex; align-items: center; padding: 0 3px; border-bottom: 1px solid #aaa; margin-bottom: 1px; }
.thumbh { width: 102px; height: 15px; background: #cdcdcd; margin: 0 auto 0 12px; }
.ar { width: 7px; height: 7px; flex: none; border-left: 2px solid #555; border-top: 2px solid #555; }
.ar.up { transform: rotate(45deg); margin-top: 10px; }
.ar.dn { transform: rotate(225deg); }
.ar.lf { transform: rotate(-45deg); margin-left: 6px; }
.ar.rt { transform: rotate(135deg); margin-right: 6px; }

/* work area */
.work { width: 1196px; margin-left: 5px; flex: none; display: flex; flex-direction: column; }
.wrow { flex: none; display: flex; padding-left: 2px; }
.r2 { height: 24px; }
.r3 { height: 25px; margin-top: 3px; }
.r4 { height: 26px; margin-top: 4px; margin-bottom: 2px; }
.rb { height: 26px; margin: 2px 0; gap: 2px; }
.bd2 { width: 789px; gap: 6.900px; }
.bd3a { width: 565px; gap: 8px; padding-left: 7px; }
.bd3a .sel { margin-right: -5px; }
.bd3a .sep { margin-left: 2px; margin-right: -3px; }
.bd3b { width: 421px; margin-left: 3px; gap: 7.300px; }
.bd3b .grip { margin-left: 0; }
.bd4a { width: 488px; padding-left: 6px; gap: 6.600px; }
.bd4a .sel { margin-right: -3px; }
.bd4b { width: 17px; margin-left: 3px; }
.sel { height: 24px; background: #fff; display: flex; align-items: center; justify-content: space-between; padding: 0 4px 0 2px; flex: none; }
.s57 { width: 57px; }
.s69 { width: 69px; }
.sel.blank { justify-content: flex-end; }
.on { background: #dbe8f6; border: 1px solid #0a7ce0; padding: 0 3px; height: 23px; }
.sel-tool { padding: 0 2px 0 7px; width: 51px; gap: 4px; }
.canvas { width: 1196px; height: 507px; display: block; flex: none; }
.axis text { font: 13px "Noto Sans", sans-serif; fill: #ccc; }
.bb1 { width: 208px; gap: 5px; }
.bb1 .grip { margin-right: 0; }
.snapbox { padding: 0 3px; width: 75px; }
.bb2 { width: 263px; gap: 6px; }
.pair { display: flex; height: 23px; margin-left: -1px; margin-right: -2px; }
.pair .ti { width: 51px; }
.pair .ti + .ti { border-left: 0; padding-left: 4px; }
.bb3 { width: 410px; gap: 3px; }
.nob { width: 57px; padding-left: 2px; }
.sx { margin-left: 3px; }
.lab { color: #777; }
.lab.y { margin-left: 2px; }
.spin { position: relative; height: 21px; border: 1px solid #767676; background: #f4f4f4; color: #888; display: flex; align-items: center; justify-content: flex-end; padding-right: 17px; font-size: 13px; }
.s57b { width: 57px; }
.s68 { width: 68px; }
.sp { position: absolute; right: 4px; top: 3px; width: 0; height: 0; border: 3px solid transparent; border-bottom: 3px solid #666; border-top: 0; }
.sp::after { content: ""; position: absolute; left: -3px; top: 9px; border: 3px solid transparent; border-top: 3px solid #666; border-bottom: 0; }
.chk { width: 11px; height: 11px; border: 1px solid #888; background: #fff; flex: none; }
.rotl { margin: 0 1px 0 6px; }

/* status */
.status { height: 19px; flex: none; margin-top: 3px; margin-bottom: 1px; display: flex; gap: 2px; font: 11px "Liberation Mono", monospace; letter-spacing: -.6px; color: #111; }
.cell { height: 19px; background: linear-gradient(#fafafa, #f2f2f2); border: 1px solid #dcdcdc; display: flex; align-items: center; padding-left: 1px; white-space: nowrap; flex: none; }
.cell b { font-weight: 400; }
.big { font-family: "Noto Sans CJK SC", sans-serif; font-size: 12px; letter-spacing: 0; }
.big b { font: 11px "Liberation Mono", monospace; letter-spacing: -.6px; }
.c147 { width: 148px; }
.c77 { width: 79px; padding-left: 0; }
.c97 { width: 98px; padding-left: 0; }
.c47 { width: 48px; padding-left: 2px; }
.cprompt { width: 914px; padding-left: 0; }
.cfps { width: 71px; }

/* task bar */
.taskbar { height: 40px; flex: none; background: #03090d; display: flex; align-items: stretch; color: #fff; }
.start { width: 48px; background: #000; display: flex; align-items: center; justify-content: center; }
.win { width: 16px; height: 16px; }
.search { width: 344px; background: #333; display: flex; align-items: center; padding-left: 9px; color: #85919a; font-size: 14px; }
.search span { flex: 1; margin-left: 5px; }
.cortana { width: 21px; height: 21px; border-radius: 50%; border: 3px solid #ddd; flex: none; }
.micsv { width: 14px; height: 18px; margin-right: 15px; }
.tk { display: flex; align-items: center; justify-content: center; flex: none; }
.tki { width: 24px; height: 24px; }
.w48 { width: 48px; } .w52 { width: 52px; } .w46 { width: 46px; } .w49 { width: 49px; } .w47 { width: 47px; } .w50 { width: 50px; } .w54 { width: 54px; }
.run { background: linear-gradient(#6fb1ec, #6fb1ec) center bottom / 100% 2px no-repeat; }
.r36 { background-size: 36px 2px; }
.r38 { background-size: 38px 2px; }
.r39 { background-size: 39px 2px; }
.act { background-color: #2f373b; }
.tktext { font-size: 12px; color: #ddd; margin-left: 2px; }
.cpu { flex-direction: column; line-height: 17px; font-size: 12px; color: #ddd; margin-left: 4px; }
.tray { width: 190px; display: flex; align-items: center; gap: 9px; padding-left: 17px; flex: none; }
.tr1 { width: 12px; height: 8px; }
.tr2 { width: 16px; height: 14px; }
.tr3 { width: 13px; height: 14px; }
.tr4 { width: 22px; height: 14px; }
.tra { font-size: 17px; color: #fff; margin-left: 2px; }
.tr5 { width: 14px; height: 16px; margin-left: 6px; }
.clock { width: 68px; display: flex; flex-direction: column; align-items: flex-end; justify-content: center; line-height: 20px; font-size: 13px; flex: none; }
.clock span:first-child { margin-right: 10px; }
.notif { position: relative; flex: 1; display: flex; align-items: center; justify-content: center; padding-bottom: 6px; }
.ncsv { width: 16px; height: 16px; }
.nbadge { position: absolute; left: 31px; top: 19px; width: 16px; height: 16px; border-radius: 50%; background: #444; border: 1px solid #888; font-size: 11px; line-height: 14px; text-align: center; color: #fff; }

/* overlays */
.gauge { position: absolute; left: 1009px; top: -29px; width: 46px; height: 46px; border-radius: 50%; background: #3fa83a; border: 3px solid #cfe8cf; box-shadow: 0 2px 3px #888; color: #fff; font-weight: 700; font-size: 11px; text-align: center; padding-top: 26px; line-height: 14px; }
.sogou { position: absolute; left: 755px; top: 14px; width: 189px; height: 24px; background: #f3f7fc; border: 1px solid #a9c4da; display: flex; align-items: center; gap: 6px; padding-left: 13px; }
.sg-s { position: absolute; left: -18px; top: -3px; width: 26px; height: 27px; }
.sg-a { color: #2a78c8; font-size: 19px; width: 16px; margin-right: 1px; line-height: 22px; }
.sg-c { color: #2a78c8; font-size: 13px; font-weight: 700; width: 15px; line-height: 18px; flex: none; }
.sgi { width: 16px; height: 16px; flex: none; }
```
